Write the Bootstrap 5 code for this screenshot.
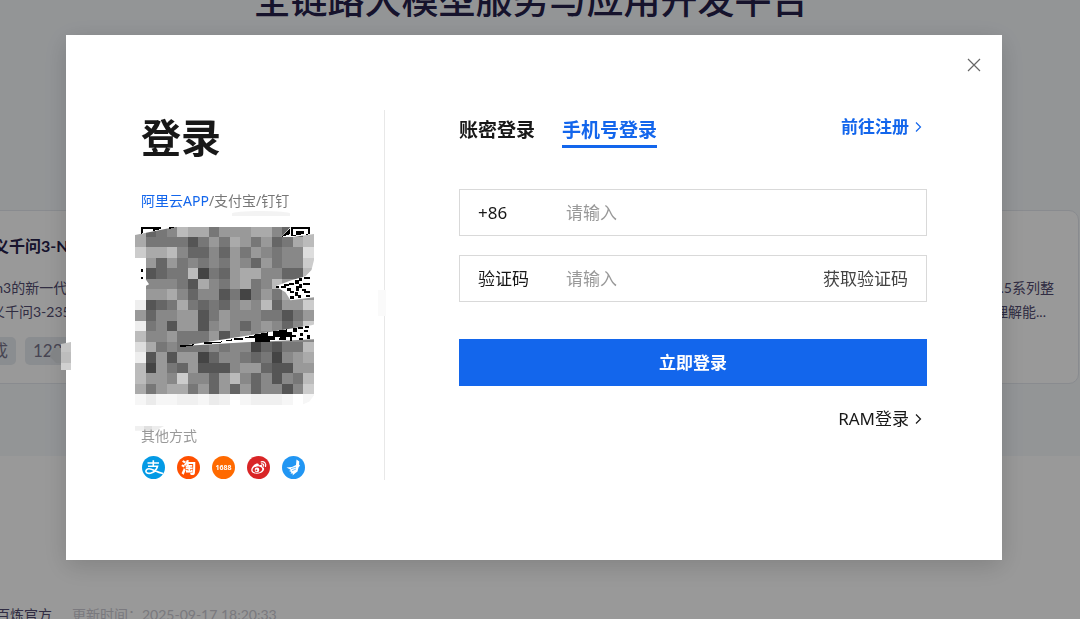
<!DOCTYPE html>
<html lang="zh-CN">
<head>
<meta charset="utf-8">
<meta name="viewport" content="width=device-width, initial-scale=1">
<title>登录</title>
<link href="https://cdn.jsdelivr.net/npm/bootstrap@5.3.0/dist/css/bootstrap.min.css" rel="stylesheet">
<style>
:root { --brand: #1366ec; --ink: #181818; }
body { font-family: Lato, "Noto Sans CJK SC", sans-serif; font-size: 14px; line-height: 24px; color: #524c70; background: #fff; overflow: hidden; }
.hero { background: #f5f8fb; padding-bottom: 72px; overflow: hidden; }
.hero-title { font-size: 37px; line-height: 56px; font-weight: 500; color: #26204a; margin: -28px 18px 182px 0; }
.model-row { margin: 0 1px 0 -48px; gap: 20px; }
.model-card { flex: 1 1 0; min-width: 0; height: 174px; padding: 22px 24px 0; border: 1px solid #e4e8ee; border-radius: 10px; background: #fff; overflow: hidden; }
.model-card h2 { font-size: 16px; line-height: 26px; font-weight: 700; color: #26204a; margin: 0 0 17px; }
.model-card p { margin: 0; white-space: nowrap; }
.model-card .tags { gap: 9px; margin-top: 13px; }
.model-tag { font-size: 17px; line-height: 28px; padding: 0 8px; border-radius: 5px; background: #e7ebf0; color: #77748a; white-space: nowrap; }
.tag-mode { margin-left: -45px; }
.meta { padding-top: 147px; margin-left: -4px; gap: 20px; white-space: nowrap; }
.meta time { color: #cbcad2; }

.veil { background: rgba(0,0,0,.4); padding: 35px 12px 0 0; }
.login-box { width: 100%; max-width: 936px; background: #fff; padding: 75px 75px 80px; box-shadow: 0 6px 24px rgba(0,0,0,.16); font-family: "Noto Sans", "Noto Sans CJK SC", sans-serif; color: var(--ink); }
.login-box a { text-decoration: none; color: inherit; }
.close-btn { top: 20px; right: 18px; width: 20px; height: 20px; }
.scan-side { width: 244px; border-right: 1px solid #e8e8e8; }
.scan-side h1 { font-size: 40px; line-height: 56px; font-weight: 700; margin: 0 0 23px; }
.scan-tip { line-height: 24px; color: #777; white-space: nowrap; }
.scan-side .scan-tip a { color: var(--brand); }
.qr-wrap { margin: 13px 0 19px -6px; width: 179px; height: 179px; }
.other-tip { line-height: 24px; color: #999; margin-bottom: 8px; }
.social { gap: 12px; padding: 0 0 1px 1px; }
.social svg { width: 23px; height: 23px; display: block; }
.form-side { padding-left: 74px; min-width: 0; }
.tabs-row { margin-bottom: 41px; }
.tabs { gap: 27px; }
.tabs button { font-size: 19px; line-height: 28px; font-weight: 700; padding: 6px 0 1px; border: 0; border-bottom: 3px solid transparent; background: none; color: var(--ink); }
.tabs button.active { color: var(--brand); border-color: var(--brand); }
.login-box .more { font-size: 17px; line-height: 26px; padding-right: 5px; gap: 5px; }
.login-box .signup { color: var(--brand); font-weight: 700; margin-top: 4px; }
.field { height: 47px; border: 1px solid #d9d9d9; font-size: 17px; margin-bottom: 19px; padding: 0 18px; }
.field label { width: 88px; }
.field input { border: 0; outline: 0; padding: 0; background: none; min-width: 0; color: inherit; }
.field input::placeholder { color: #999; opacity: 1; }
.field button { border: 0; padding: 0; background: none; color: #444; }
.submit-btn { height: 47px; border: 0; border-radius: 0; padding: 0; background: var(--brand); font-size: 17px; font-weight: 700; margin: 37px 0 20px; }
.smudge { pointer-events: none; }
.smudge-top { left: 166px; top: 176px; width: 58px; height: 5px; border-radius: 50% 50% 0 0; background: #f3f3f3; }
.smudge-low { left: 69px; top: 391px; width: 29px; height: 6px; background: linear-gradient(90deg,#f0f0f0 30%,#e0e0e0 30% 60%,#ededed 60%); clip-path: polygon(0 0,100% 0,70% 80%,0 80%); }
.smudge-mid { left: 312px; top: 255px; width: 8px; height: 26px; background: #fafafa; }
.smudge-edge { left: -16px; top: 306px; width: 21px; height: 29px; }
</style>
</head>
<body>
<main aria-hidden="true">
  <section class="hero">
    <p class="hero-title text-center">全链路大模型服务与应用开发平台</p>
    <div class="model-row d-flex">
      <article class="model-card">
        <h2>通义千问3-Next</h2>
        <p>wen3的新一代模型</p>
        <p>通义千问3-235B</p>
        <div class="tags d-flex"><span class="model-tag tag-mode">文本生成</span><span class="model-tag">128K</span></div>
      </article>
      <article class="model-card"></article>
      <article class="model-card text-end">
        <h2>&nbsp;</h2>
        <p>通义千问2.5系列整</p>
        <p class="pe-2">图像理解能...</p>
      </article>
    </div>
  </section>
  <div class="meta d-flex"><span>百炼官方</span><time>更新时间：2025-09-17 18:20:33</time></div>
</main>

<div class="veil position-fixed top-0 start-0 w-100 h-100 d-flex justify-content-center align-items-start">
  <div class="login-box position-relative d-flex" role="dialog" aria-modal="true" aria-labelledby="loginTitle">
    <span class="smudge smudge-low position-absolute"></span>
    <button type="button" class="close-btn btn p-0 border-0 position-absolute d-flex align-items-center justify-content-center" aria-label="关闭">
      <svg width="14" height="14" viewBox="0 0 14 14" stroke="#666" stroke-width="1.2"><path d="M1 1l12 12M13 1L1 13"/></svg>
    </button>

    <section class="scan-side position-relative flex-shrink-0">
      <h1 id="loginTitle">登录</h1>
      <div class="scan-tip"><a href="#">阿里云APP</a>/支付宝/钉钉</div>
      <div class="qr-wrap">
        <svg id="qr" width="179" height="179" viewBox="0 0 178.5 178.5" role="img" aria-label="二维码">
          <g id="cells" shape-rendering="crispEdges"></g>
          <!-- uncovered corners -->
          <g fill="#fff">
            <path d="M0 0H45L0 9Z"/>
            <path d="M146 11L156 0H179V8L158 11Z"/>
            <path d="M0 32H4L6 46L14 58L10 60L0 61Z"/>
            <path d="M179 32L176 44L170 50L156 54L140 60L150 66L155 74L179 71V32Z"/>
            <path d="M45 120L176 99L179 98V113L110 116L60 119Z"/>
            <path d="M179 166V179H165L174 175L179 168Z"/>
          </g>
          <g shape-rendering="crispEdges">
            <path d="M6 1H26V3L18 5V3H8V7L6 8ZM34 1H41L34 3ZM6 43h2v3H6ZM6 51h2v2H6Z"/>
            <path fill-rule="evenodd" d="M156 1H175V8L156 10ZM158 3V9H173V3ZM161 5h8v3l-8 1ZM146 11l9-9v6Z"/>
            <path d="M141 60h3v2h-3ZM146 60h3v-2h5v2h-3v2h-5ZM154 57h5v2h-5ZM160 54h4v-2h3v3h-3v3h-4ZM169 51h6v2h-6ZM168 57h7v2h-7ZM161 60h3v-2h3v4h-3v3h-3ZM152 62h4v3h3v2h-4v-2h-3ZM167 63h4v2h4v2h-6v-2h-2ZM171 69h4v2h-4ZM155 70h4v3h-4ZM160 66h3v3h3v3h-3v-2h-3Z"/>
            <path d="M45 119l14-1v1l-14 2ZM69 116h10l8-1v1l-18 2ZM91 114l6-1v2h-6ZM99 112h9v2h-9ZM110 111l10-2v3h-10ZM120 108l13-2v4h5v-5l14-2v3h6v-4h4v4h-5v3h4v2h-4v4h-2v-4h-4v3h-6v-3h-5v3h-5v2h-15ZM144 112h4v2h-4ZM163 101h5v2h-5ZM170 100h4v2h-4ZM165 107h3v3h-3ZM169 104h4v2h-4ZM172 109h3v4h-3ZM164 112h4v2h-4Z"/>
          </g>
        </svg>
      </div>
      <div class="other-tip">其他方式</div>
      <div class="social d-flex">
        <a href="#" aria-label="支付宝"><svg viewBox="0 0 23 23"><circle cx="11.500" cy="11.500" r="11.500" fill="#049ae5"/><g fill="none" stroke="#fff" stroke-width="1.600"><path d="M5.500 7H17M11.300 4.200V10M6 10.200H15.500Q14 16 8.500 17.200C2.500 18.200 2.800 12.800 7 12.800C11 12.800 13.500 16 21 17.500"/></g></svg></a>
        <a href="#" aria-label="淘宝"><svg viewBox="0 0 23 23"><circle cx="11.500" cy="11.500" r="11.500" fill="#ff5000"/><text x="11.500" y="17" text-anchor="middle" font-size="15" font-weight="900" fill="#fff">淘</text></svg></a>
        <a href="#" aria-label="1688"><svg viewBox="0 0 23 23"><circle cx="11.500" cy="11.500" r="11.500" fill="#ff6a00"/><text x="11.500" y="14" text-anchor="middle" font-family="Noto Sans" font-size="7" font-weight="700" fill="#fff">1688</text></svg></a>
        <a href="#" aria-label="微博"><svg viewBox="0 0 23 23"><circle cx="11.500" cy="11.500" r="11.500" fill="#d92526"/><path fill="#fff" d="M9.500 7.500C11.500 7 12.200 8.200 11.700 9.500C14.500 8.400 16 9.300 15.300 11C17.400 11.700 17.700 13.200 16.300 15C14.500 17.500 9.500 18.600 6.300 17C3.700 15.700 3.700 13.300 5.300 11.100C6.500 9.400 8 8 9.500 7.500Z"/><ellipse cx="10.400" cy="13.600" rx="4.900" ry="3.200" fill="#d92526" transform="rotate(-8 10.400 13.600)"/><circle cx="10" cy="13.900" r="2.300" fill="#fff"/><circle cx="9.400" cy="14.300" r=".9" fill="#d92526"/><path d="M14.200 5.800C17.500 5.200 19.500 7.700 18.500 10.500M14.500 7.900C16.200 7.600 17.100 8.700 16.600 10.100" fill="none" stroke="#fff" stroke-width="1.200" stroke-linecap="round"/></svg></a>
        <a href="#" aria-label="钉钉"><svg viewBox="0 0 23 23"><circle cx="11.500" cy="11.500" r="11.500" fill="#2196f3"/><path fill="#fff" d="M14.500 3.500L17.300 5.500L17 8.500L18 9.500L16.500 11.500L15.500 15.500L13.500 17L10.500 19.500L11 17.500L8.500 17.500L9.500 16L7 15L9 14L4.500 11.500L10 11L14 9Z"/><path d="M9 12.700L14 11.200M10 14.800L14 13" stroke="#2196f3" stroke-width=".6"/></svg></a>
      </div>
    </section>

    <form class="form-side flex-grow-1" onsubmit="return false">
      <div class="tabs-row d-flex justify-content-between align-items-start">
        <div class="tabs d-flex" role="tablist">
          <button type="button" role="tab" aria-selected="false">账密登录</button>
          <button type="button" role="tab" aria-selected="true" class="active">手机号登录</button>
        </div>
        <a href="#" class="more signup d-flex align-items-center">前往注册
          <svg width="8" height="12" viewBox="0 0 8 12" fill="none" stroke="currentColor" stroke-width="1.2"><path d="M2 1.500L6.500 6L2 10.500"/></svg></a>
      </div>
      <div class="field d-flex align-items-center">
        <label for="phone">+86</label>
        <input id="phone" class="flex-grow-1" type="tel" placeholder="请输入">
      </div>
      <div class="field d-flex align-items-center">
        <label for="code">验证码</label>
        <input id="code" class="flex-grow-1" type="text" placeholder="请输入">
        <button type="button">获取验证码</button>
      </div>
      <button type="submit" class="submit-btn btn btn-primary w-100 d-block">立即登录</button>
      <a href="#" class="more d-flex align-items-center justify-content-end">RAM登录
        <svg width="8" height="12" viewBox="0 0 8 12" fill="none" stroke="currentColor" stroke-width="1.2"><path d="M2 1.500L6.500 6L2 10.500"/></svg></a>
    </form>

    <span class="smudge smudge-top position-absolute"></span>
    <span class="smudge smudge-mid position-absolute"></span>
    <svg class="smudge smudge-edge position-absolute" viewBox="0 0 21 29"><path d="M1 12L4 7H11V22H6L0 16Z" fill="#818385"/><path d="M11 3L21 1V11H11Z" fill="#c4c4c4"/><path d="M11 11H21V22H11Z" fill="#bdbdbd"/><path d="M11 22H21V29H11Z" fill="#d0d0d0"/></svg>
  </div>
</div>

<script src="https://cdn.jsdelivr.net/npm/bootstrap@5.3.0/dist/js/bootstrap.bundle.min.js"></script>
<script>
// One hex digit of grey per mosaic block; "." leaves a block empty.
const rows = [
  'a678baa7999aa866b', 'a77775797a97967ab', 'caab866869798788d', '.969787879869788c',
  '.5677b4769aa8866b', '.88875a879a78b99.', 'f99a8688574797a99', 'e567a7676898b699c',
  '96889957988877579', 'e785995898689868c', 'b8897779589888888', 'da78777878846577b',
  'e595994688767489a', 'b4976955589965599', 'b998c8869b868587b', 'a79aa79696968858c',
  '#*##++#*+.#+++#.#'
];
const soft = { '#': '#f6f6f6', '*': '#ebebeb', '+': '#f0f0f0' };
const g = document.getElementById('cells');
rows.forEach((row, y) => [...row].forEach((c, x) => {
  if (c === '.') return;
  const r = document.createElementNS('http://www.w3.org/2000/svg', 'rect');
  r.setAttribute('x', x * 10.5);
  r.setAttribute('y', y ? y * 10.5 : 1);
  r.setAttribute('width', 10.5);
  r.setAttribute('height', y ? 10.5 : 9.5);
  r.setAttribute('fill', soft[c] || '#' + c + c + c);
  g.appendChild(r);
}));
</script>
</body>
</html>
